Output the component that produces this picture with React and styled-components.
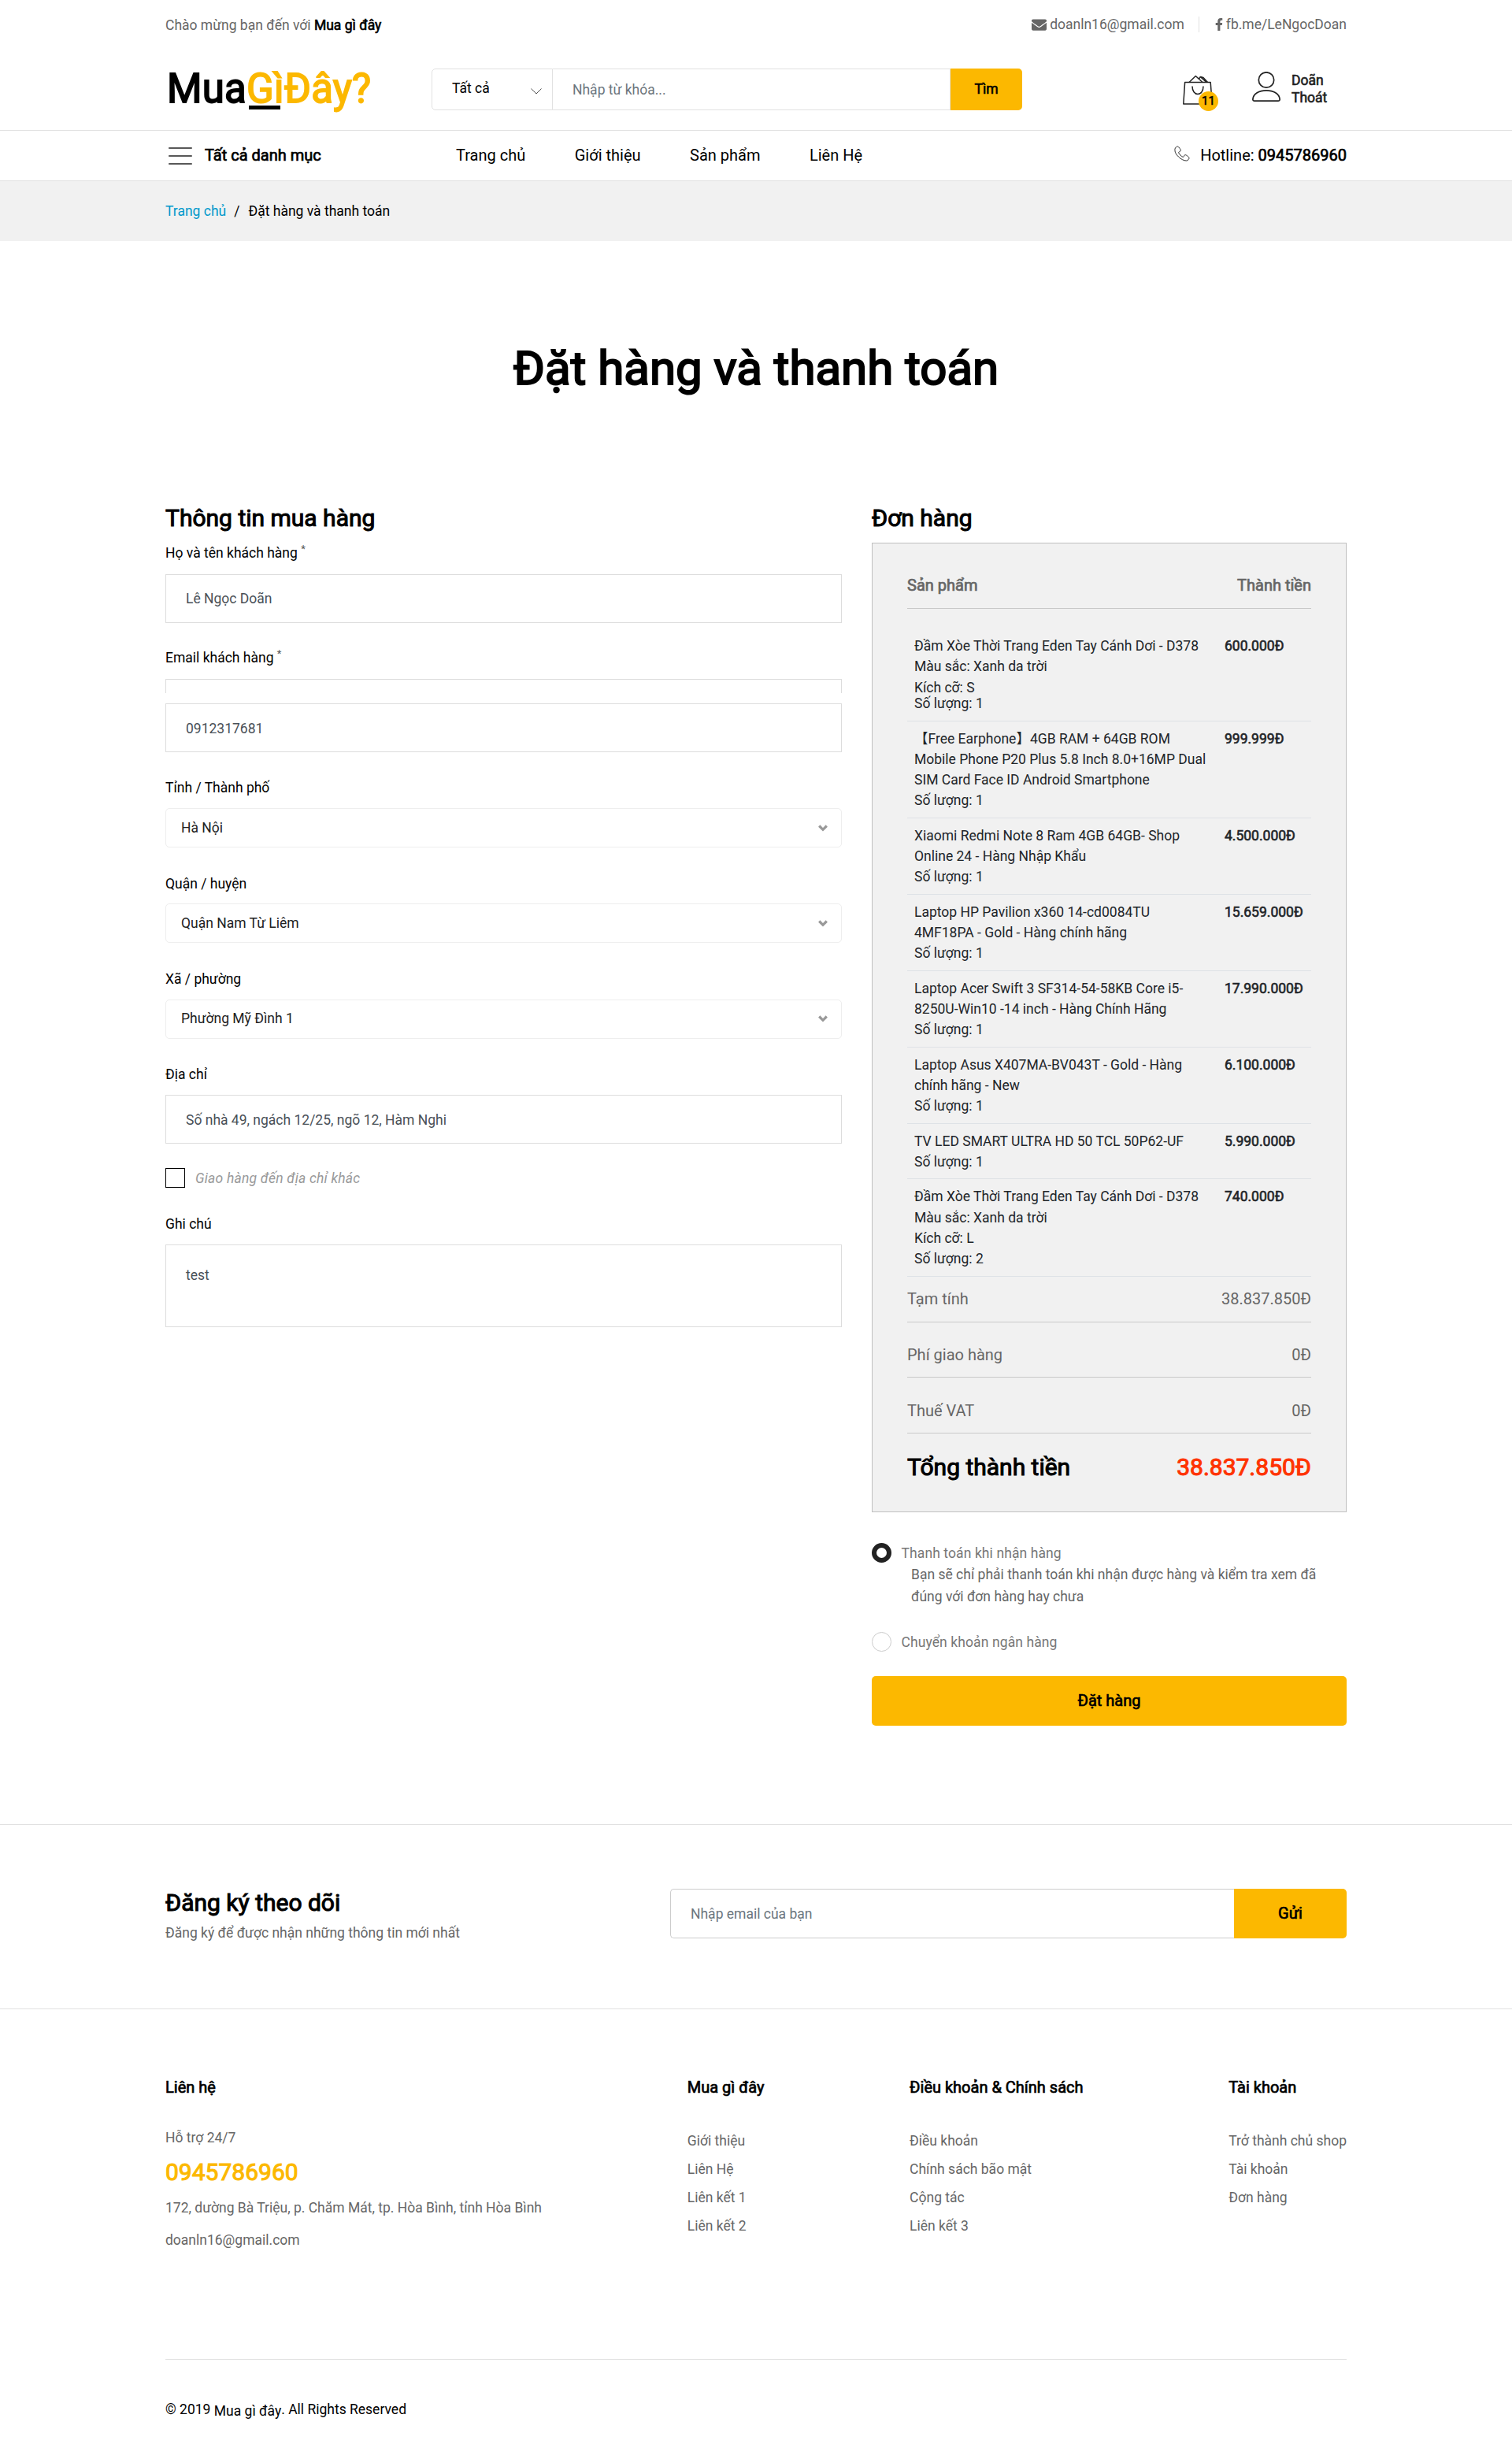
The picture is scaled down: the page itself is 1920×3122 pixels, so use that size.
import styled, { createGlobalStyle, css } from 'styled-components'
import { FaEnvelope, FaFacebookF } from 'react-icons/fa'

const products = [
    { lines: ['Đầm Xòe Thời Trang Eden Tay Cánh Dơi - D378', 'Màu sắc: Xanh da trời', 'Kích cỡ: S'], qty: 1, price: '600.000Đ', tight: true },
    { lines: ['【Free Earphone】4GB RAM + 64GB ROM', 'Mobile Phone P20 Plus 5.8 Inch 8.0+16MP Dual', 'SIM Card Face ID Android Smartphone'], qty: 1, price: '999.999Đ' },
    { lines: ['Xiaomi Redmi Note 8 Ram 4GB 64GB- Shop', 'Online 24 - Hàng Nhập Khẩu'], qty: 1, price: '4.500.000Đ' },
    { lines: ['Laptop HP Pavilion x360 14-cd0084TU', '4MF18PA - Gold - Hàng chính hãng'], qty: 1, price: '15.659.000Đ' },
    { lines: ['Laptop Acer Swift 3 SF314-54-58KB Core i5-', '8250U-Win10 -14 inch - Hàng Chính Hãng'], qty: 1, price: '17.990.000Đ' },
    { lines: ['Laptop Asus X407MA-BV043T - Gold - Hàng', 'chính hãng - New'], qty: 1, price: '6.100.000Đ' },
    { lines: ['TV LED SMART ULTRA HD 50 TCL 50P62-UF'], qty: 1, price: '5.990.000Đ' },
    { lines: ['Đầm Xòe Thời Trang Eden Tay Cánh Dơi - D378', 'Màu sắc: Xanh da trời', 'Kích cỡ: L'], qty: 2, price: '740.000Đ' },
]

const totals = [
    ['Tạm tính', '38.837.850Đ'],
    ['Phí giao hàng', '0Đ'],
    ['Thuế VAT', '0Đ'],
]

const selects = [
    ['Tỉnh / Thành phố', 'Hà Nội'],
    ['Quận / huyện', 'Quận Nam Từ Liêm'],
    ['Xã / phường', 'Phường Mỹ Đình 1'],
]

const footerLinks = [
    { title: 'Mua gì đây', links: ['Giới thiệu', 'Liên Hệ', 'Liên kết 1', 'Liên kết 2'] },
    { title: 'Điều khoản & Chính sách', links: ['Điều khoản', 'Chính sách bão mật', 'Cộng tác', 'Liên kết 3'] },
    { title: 'Tài khoản', links: ['Trở thành chủ shop', 'Tài khoản', 'Đơn hàng'] },
]

function Header() {
    return (
        <header>
            <TopBar>
                <Welcome>Chào mừng bạn đến với <strong>Mua gì đây</strong></Welcome>
                <TopLinks>
                    <TopLink><FaEnvelope size={19}/>doanln16@gmail.com</TopLink>
                    <TopLink><FaFacebookF size={16}/>fb.me/LeNgocDoan</TopLink>
                </TopLinks>
            </TopBar>

            <MainBar>
                <Logo>Mua<span><u>Gì</u>Đây?</span></Logo>
                <Search>
                    <Category>
                        Tất cả
                        <svg width="14" height="8" viewBox="0 0 14 8" fill="none" stroke="#555">
                            <path d="M.5.5 7 7 13.500.5"/>
                        </svg>
                    </Category>
                    <SearchInput placeholder="Nhập từ khóa..."/>
                    <SearchButton>Tìm</SearchButton>
                </Search>
                <Cart>
                    <svg width="38" height="38" viewBox="0 0 38 38" fill="none" stroke="#222" strokeWidth="1.5" strokeLinejoin="round">
                        <path d="M2.600 9.600h32.600l2 27.400H.800z"/>
                        <path d="M8 9.500 16.300 1.500 25 9.500M20.500 5.200 22.300 2.500 30 9.500M22.500 2.500l3.500 1 5.500 6"/>
                        <path d="M12 14.500c0 6 3 10 7 10s7-4 7-10"/>
                    </svg>
                    <Badge>11</Badge>
                </Cart>
                <Account>
                    <svg width="36" height="38" viewBox="0 0 36 38" fill="none" stroke="#222" strokeWidth="1.700">
                        <circle cx="18" cy="10.500" r="9.700"/>
                        <path d="M3 37.100h30c1.500 0 2.200-.8 2.100-2.200C34.500 28 27 23.900 18 23.900S1.500 28 .9 34.900c-.1 1.400.6 2.200 2.100 2.200z"/>
                    </svg>
                    <AccountLinks>
                        <span>Doãn</span>
                        <span>Thoát</span>
                    </AccountLinks>
                </Account>
            </MainBar>

            <NavBar>
                <NavInner>
                    <Categories>
                        <svg width="30" height="22" viewBox="0 0 30 22" stroke="#222" strokeWidth="1.600" strokeLinecap="round">
                            <path d="M.8 1h28.400M.8 11h28.400M.8 21h28.400"/>
                        </svg>
                        Tất cả danh mục
                    </Categories>
                    <Menu>
                        <a>Trang chủ</a>
                        <a>Giới thiệu</a>
                        <a>Sản phẩm</a>
                        <a>Liên Hệ</a>
                    </Menu>
                    <Hotline>
                        <svg width="20" height="20" viewBox="-.5 -.5 21 21" fill="none" stroke="#222">
                            <path d="M16 19.500c-1.771 0-3.655-.502-5.600-1.492-1.793-.913-3.564-2.220-5.122-3.780S2.415 11.395 1.503 9.600C.515 7.655.5 5.771.5 4c0-1.148 1-2.100 1.500-2.500C2.700.9 3.300.5 4 .5c.4 0 .800.200 1.370.774.425.394.904.928 1.383 1.544C7.042 3.190 8.300 4.800 8.300 5.700c0 .747-.845 1.267-1.739 1.816-.346.212-.703.431-.961.638-.276.221-.325.338-.333.364.949 2.366 3.850 5.267 6.215 6.215.021-.007.138-.053.363-.333.207-.258.426-.616.638-.961.550-.894 1.069-1.739 1.816-1.739.911 0 2.600 1.241 2.972 1.530.616.478 1.050.858 1.444 1.283.528.570.774 1.011.774 1.387 0 .756-.611 1.599-1.219 2.263-.424.462-1.123 1.337-2.271 1.337z"/>
                        </svg>
                        Hotline: <strong>0945786960</strong>
                    </Hotline>
                </NavInner>
            </NavBar>
        </header>
    )
}

function CustomerForm() {
    return (
        <FormColumn>
            <SectionTitle>Thông tin mua hàng</SectionTitle>
            <Field $gap={31.25}>
                <Label $required>Họ và tên khách hàng <sup>*</sup></Label>
                <Input defaultValue="Lê Ngọc Doãn"/>
            </Field>
            <Field $gap={13}>
                <Label $required>Email khách hàng <sup>*</sup></Label>
                <CutInput/>
            </Field>
            <Field $gap={32}>
                <Input defaultValue="0912317681"/>
            </Field>
            {selects.map(([label, value]) => (
                <Field key={label}>
                    <Label>{label}</Label>
                    <Select>
                        {value}
                        <svg width="12" height="9" viewBox="0 0 12 9" fill="none" stroke="#999" strokeWidth="3.200">
                            <path d="M1.200 1.500 6 6.300l4.800-4.800"/>
                        </svg>
                    </Select>
                </Field>
            ))}
            <Field $gap={30.5}>
                <Label>Địa chỉ</Label>
                <Input defaultValue="Số nhà 49, ngách 12/25, ngõ 12, Hàm Nghi"/>
            </Field>
            <CheckRow>
                <CheckBox/>
                Giao hàng đến địa chỉ khác
            </CheckRow>
            <Field>
                <Label $required>Ghi chú</Label>
                <TextArea defaultValue="test"/>
            </Field>
        </FormColumn>
    )
}

function Order() {
    return (
        <OrderColumn>
            <SectionTitle>Đơn hàng</SectionTitle>
            <OrderBox>
                <OrderHead>
                    <span>Sản phẩm</span>
                    <span>Thành tiền</span>
                </OrderHead>
                <ProductList>
                    {products.map((product, i) => (
                        <ProductRow key={i}>
                            <ProductName>
                                {product.lines.map(line => <div key={line}>{line}</div>)}
                                <Quantity $tight={product.tight}>Số lượng: {product.qty}</Quantity>
                            </ProductName>
                            <Price>{product.price}</Price>
                        </ProductRow>
                    ))}
                </ProductList>
                {totals.map(([label, value], i) => (
                    <TotalRow key={label} $first={i === 0}>
                        <span>{label}</span>
                        <span>{value}</span>
                    </TotalRow>
                ))}
                <GrandTotal>
                    <span>Tổng thành tiền</span>
                    <em>38.837.850Đ</em>
                </GrandTotal>
            </OrderBox>

            <RadioRow>
                <Radio $checked/>
                <span>Thanh toán khi nhận hàng</span>
            </RadioRow>
            <RadioNote>Bạn sẽ chỉ phải thanh toán khi nhận được hàng và kiểm tra xem đã đúng với đơn hàng hay chưa</RadioNote>
            <RadioRow>
                <Radio/>
                <span>Chuyển khoản ngân hàng</span>
            </RadioRow>
            <SubmitButton>Đặt hàng</SubmitButton>
        </OrderColumn>
    )
}

function Footer() {
    return (
        <footer>
            <Newsletter>
                <NewsletterInner>
                    <div>
                        <SectionTitle>Đăng ký theo dõi</SectionTitle>
                        <NewsletterText>Đăng ký để được nhận những thông tin mới nhất</NewsletterText>
                    </div>
                    <NewsletterForm>
                        <EmailInput placeholder="Nhập email của bạn"/>
                        <SendButton>Gửi</SendButton>
                    </NewsletterForm>
                </NewsletterInner>
            </Newsletter>

            <FooterColumns>
                <div>
                    <FooterTitle>Liên hệ</FooterTitle>
                    <Contact>
                        <p>Hỗ trợ 24/7</p>
                        <Phone>0945786960</Phone>
                        <p>172, dường Bà Triệu, p. Chăm Mát, tp. Hòa Bình, tỉnh Hòa Bình</p>
                        <p>doanln16@gmail.com</p>
                    </Contact>
                </div>
                {footerLinks.map(group => (
                    <div key={group.title}>
                        <FooterTitle>{group.title}</FooterTitle>
                        <LinkList>
                            {group.links.map(link => <li key={link}>{link}</li>)}
                        </LinkList>
                    </div>
                ))}
            </FooterColumns>

            <Copyright>
                © 2019 <span>Mua gì đây</span>. All Rights Reserved
            </Copyright>
        </footer>
    )
}

function App() {
    return (
        <>
            <GlobalStyle/>
            <Header/>
            <Breadcrumb>
                <Wrap>
                    <a>Trang chủ</a>
                    <i>/</i>
                    <span>Đặt hàng và thanh toán</span>
                </Wrap>
            </Breadcrumb>
            <PageTitle>Đặt hàng và thanh toán</PageTitle>
            <Checkout>
                <CustomerForm/>
                <Order/>
            </Checkout>
            <Footer/>
        </>
    )
}

export default App

const GlobalStyle = createGlobalStyle`
    * {
        box-sizing: border-box;
    }

    body {
        margin: 0;
        background: #fff;
        color: #666;
        font-family: Roboto, "Noto Sans CJK SC", sans-serif;
        font-size: 17.5px;
        line-height: 26.25px;
    }

    input, textarea, button {
        font: inherit;
        outline: none;
    }

    svg {
        display: block;
        flex-shrink: 0;
    }

    p {
        margin: 0;
    }
`

// regular glyphs thickened, keeps the regular letter widths
const bold = css`
    font-weight: 400;
    -webkit-text-stroke: 0.035em currentColor;
`

const Wrap = styled.div`
    width: 1500px;
    margin: 0 auto;
    display: flex;
    align-items: center;
`

const TopBar = styled(Wrap)`
    height: 62px;
    justify-content: space-between;
`

const Welcome = styled.div`
    padding-top: 2px;

    strong {
        ${bold}
        color: #000;
    }
`

const TopLinks = styled.div`
    display: flex;
`

const TopLink = styled.div`
    display: flex;
    align-items: center;
    gap: 4px;
    line-height: 20px;

    & + & {
        margin-left: 18px;
        padding-left: 17px;
        border-left: 1px solid #e1e1e1;
        gap: 1px;
    }
`

const MainBar = styled(Wrap)`
    height: 103px;
`

const Logo = styled.div`
    ${bold}
    width: 338px;
    padding: 0 0 2px 2px;
    font-size: 51px;
    line-height: 60px;
    letter-spacing: 0.2px;
    color: #000;

    span {
        color: #fcb800;
    }

    u {
        text-decoration: none;
        background: linear-gradient(#000, #000) no-repeat left 3px bottom 3px / 40px 5px;
    }
`

const Search = styled.div`
    width: 750px;
    height: 53px;
    display: flex;
`

const Category = styled.div`
    width: 154px;
    display: flex;
    align-items: center;
    justify-content: space-between;
    padding: 0 13px 2px 25px;
    border: 1px solid #e1e1e1;
    border-radius: 5px 0 0 5px;
    color: #000;

    svg {
        margin-top: 6px;
    }
`

const SearchInput = styled.input`
    flex: 1;
    min-width: 0;
    padding: 1px 25px 0;
    border: 1px solid #e1e1e1;
    border-left: none;

    &::placeholder {
        color: #6c757d;
    }
`

const yellowButton = css`
    ${bold}
    border: none;
    background: #fcb800;
    color: #000;
`

const SearchButton = styled.button`
    ${yellowButton}
    width: 91px;
    padding: 0 0 1px;
    border-radius: 0 5px 5px 0;
`

const Cart = styled.div`
    position: relative;
    margin-left: 204px;
`

const Badge = styled.span`
    ${bold}
    position: absolute;
    right: -7px;
    bottom: -8px;
    width: 25px;
    height: 25px;
    border-radius: 50%;
    background: #fcb800;
    color: #000;
    font-size: 15px;
    line-height: 24px;
    text-align: center;
`

const Account = styled.div`
    display: flex;
    align-items: center;
    gap: 14px;
    margin-left: 50px;
    padding-bottom: 7px;
`

const AccountLinks = styled.div`
    ${bold}
    display: flex;
    flex-direction: column;
    padding-top: 6px;
    line-height: 22px;
    color: #222;
`

const NavBar = styled.nav`
    height: 65px;
    border-top: 1px solid #e1e1e1;
    border-bottom: 1px solid #e1e1e1;
`

const NavInner = styled(Wrap)`
    height: 63px;
    font-size: 20px;
    color: #000;
`

const Categories = styled.div`
    ${bold}
    width: 369px;
    display: flex;
    align-items: center;
    gap: 16px;
    padding-left: 4px;
`

const Menu = styled.div`
    flex: 1;
    display: flex;
    gap: 62.5px;
`

const Hotline = styled.div`
    display: flex;
    align-items: center;
    gap: 5px;

    svg {
        margin: -6px 8px 0 0;
    }

    strong {
        ${bold}
    }
`

const Breadcrumb = styled.div`
    height: 76px;
    padding-top: 25px;
    background: #f1f1f1;
    color: #000;

    a {
        color: #09c;
    }

    i {
        margin: 0 11px 0 10px;
        font-style: normal;
    }
`

const PageTitle = styled.h1`
    ${bold}
    margin: 126px 0 136px;
    font-size: 60px;
    line-height: 72px;
    text-align: center;
    color: #000;
`

const Checkout = styled.main`
    width: 1500px;
    height: 1676px;
    margin: 0 auto;
    display: flex;
    justify-content: space-between;
`

const FormColumn = styled.div`
    width: 859px;
`

const SectionTitle = styled.h3`
    ${bold}
    margin: 0 0 13px;
    font-size: 30px;
    line-height: 36px;
    color: #000;
`

const Field = styled.div`
    margin-bottom: ${props => props.$gap ?? 32.5}px;
`

const Label = styled.div`
    height: ${props => props.$required ? 27 : 26.25}px;
    margin-bottom: 12.5px;
    color: #000;

    sup {
        font-size: 13px;
        line-height: 0;
        color: #555;
    }
`

const inputBox = css`
    display: block;
    width: 100%;
    border: 1px solid #ddd;
    background: #fff;
    color: #495057;
`

const Input = styled.input`
    ${inputBox}
    height: 62.5px;
    padding: 1px 25px 0;
`

const CutInput = styled.div`
    ${inputBox}
    height: 18px;
    border-bottom: none;
`

const Select = styled.div`
    height: 50px;
    display: flex;
    align-items: center;
    justify-content: space-between;
    padding: 0 17px 0 19px;
    border: 1px solid #eee;
    border-radius: 5px;
    color: #222;
`

const CheckRow = styled.div`
    display: flex;
    align-items: center;
    gap: 13px;
    margin-bottom: 31.5px;
    font-style: italic;
    letter-spacing: 0.2px;
    color: #999;
`

const CheckBox = styled.span`
    width: 25px;
    height: 25px;
    border: 1px solid #000;
`

const TextArea = styled.textarea`
    ${inputBox}
    height: 105px;
    padding: 25px;
    resize: none;
`

const OrderColumn = styled.div`
    width: 603px;
`

const OrderBox = styled.div`
    margin-bottom: 38px;
    padding: 40px 44px 37.5px;
    border: 1px solid #bfbfbf;
    background: #f1f1f1;
`

const OrderHead = styled.div`
    ${bold}
    display: flex;
    justify-content: space-between;
    padding-bottom: 16px;
    border-bottom: 1px solid #c9c9c9;
    font-size: 20px;
    line-height: 26px;
`

const ProductList = styled.div`
    margin-top: 25px;
    color: #212529;
`

const ProductRow = styled.div`
    display: flex;
    padding: 9px 9px 8.2px;
    border-bottom: 1px solid #dee2e6;
`

const ProductName = styled.div`
    width: 394px;
    white-space: nowrap;
`

const Quantity = styled.div`
    margin-top: ${props => props.$tight ? '-5.5px' : 0};
`

const Price = styled.div`
    ${bold}
`

const TotalRow = styled.div`
    display: flex;
    align-items: flex-end;
    justify-content: space-between;
    height: ${props => props.$first ? 58 : 70.8}px;
    padding-bottom: 13.5px;
    border-bottom: 1px solid #c9c9c9;
    font-size: 20px;
    line-height: 30px;
`

const GrandTotal = styled.div`
    ${bold}
    display: flex;
    justify-content: space-between;
    padding-top: 25px;
    font-size: 30px;
    line-height: 36px;
    color: #000;

    em {
        font-style: normal;
        color: #ff3300;
    }
`

const RadioRow = styled.div`
    display: flex;
    align-items: center;
    gap: 12.5px;
    letter-spacing: 0.1px;
    color: #777;

    span:last-child {
        padding-top: 1px;
    }
`

const Radio = styled.span`
    width: 25px;
    height: 25px;
    border: ${props => props.$checked ? '6px solid #222' : '1px solid #ccc'};
    border-radius: 50%;
`

const RadioNote = styled.p`
    margin-bottom: 30px;
    padding-left: 50px;
    line-height: 28px;
`

const SubmitButton = styled.button`
    ${yellowButton}
    width: 100%;
    height: 63px;
    margin-top: 30px;
    border-radius: 5px;
    font-size: 20px;
`

const Newsletter = styled.section`
    height: 235px;
    padding-top: 81px;
    border-top: 1px solid #e1e1e1;
    border-bottom: 1px solid #e1e1e1;
`

const NewsletterInner = styled(Wrap)`
    align-items: flex-start;
    justify-content: space-between;
`

const NewsletterText = styled.p`
    margin-top: -6px;
`

const NewsletterForm = styled.div`
    width: 859px;
    height: 63px;
    display: flex;
`

const EmailInput = styled.input`
    flex: 1;
    padding: 1px 25px 0;
    border: 1px solid #ccc;
    border-right: none;
    border-radius: 5px 0 0 5px;

    &::placeholder {
        color: #6c757d;
    }
`

const SendButton = styled.button`
    ${yellowButton}
    width: 143px;
    border-radius: 0 5px 5px 0;
    font-size: 20px;
`

const FooterColumns = styled.div`
    width: 1500px;
    height: 445px;
    margin: 0 auto;
    padding-top: 86px;
    display: flex;
    justify-content: space-between;
    border-bottom: 1px solid #e1e1e1;
`

const FooterTitle = styled.h4`
    ${bold}
    margin: 0;
    font-size: 20px;
    line-height: 26px;
    color: #000;
`

const Contact = styled.div`
    padding-top: 38px;

    p + p {
        margin-top: 14.5px;
    }
`

const Phone = styled.h3`
    ${bold}
    margin: 13px 0 13.5px;
    font-size: 30px;
    line-height: 36px;
    color: #fcb800;
`

const LinkList = styled.ul`
    margin: 0;
    padding: 37px 0 0;
    list-style: none;
    line-height: 36px;
`

const Copyright = styled(Wrap)`
    display: block;
    height: 126px;
    padding-top: 50px;
    color: #000;

    span {
        display: inline-block;
        transform: translateY(2px);
    }
`
